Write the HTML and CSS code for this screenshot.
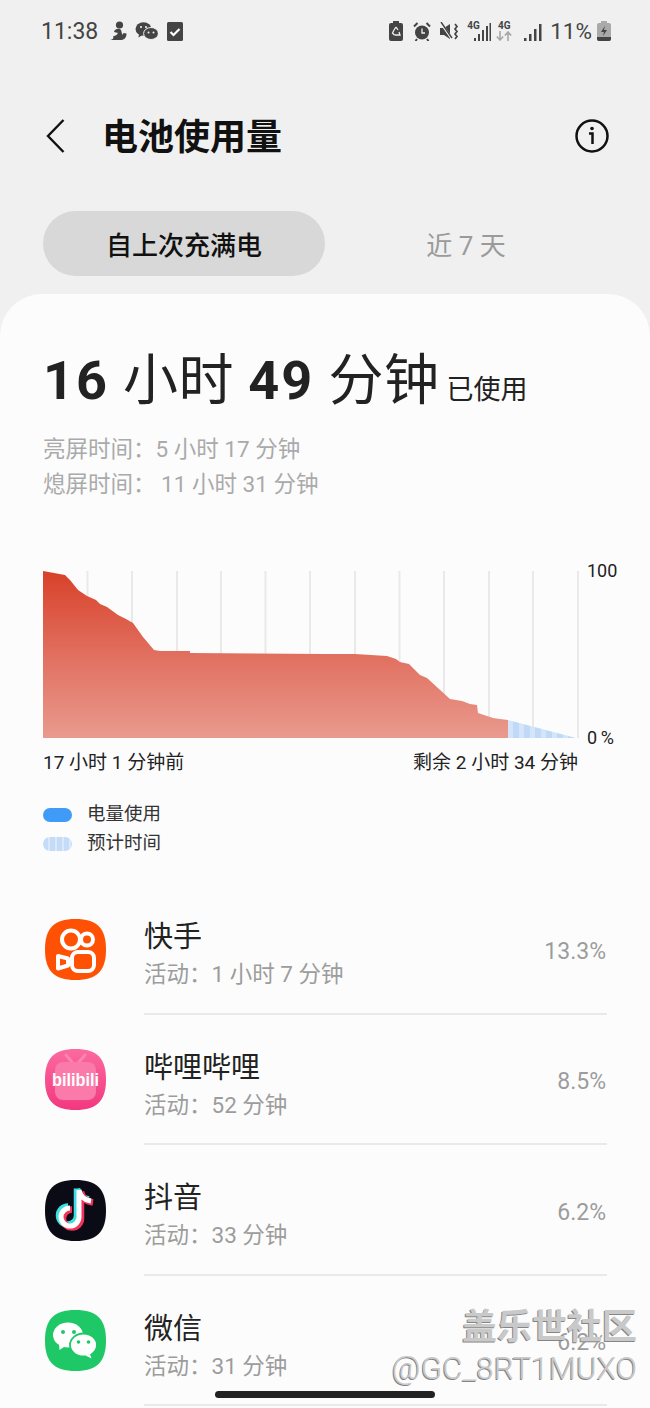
FILE: index.html
```html
<!DOCTYPE html>
<html lang="zh">
<head>
<meta charset="utf-8">
<title>电池使用量</title>
<link rel="stylesheet" href="styles.css">
</head>
<body>
<div class="screen">
  <div class="status">
    <div class="status-left">
      <span class="time">11:38</span>
      <svg class="ml-11" width="18" height="20" viewBox="0 0 18 20"><circle cx="10.500" cy="4" r="3.600" fill="#444"/><path d="M8 8c3-1 4.500 1 4.500 3l1 3 1-2 3 .5c0 4-2 6.500-6 6.500H1c3-.5 4-2 3-3.500l3.500-1.500L9 12l-4-1c0-1 1-2.500 3-3z" fill="#444"/></svg>
      <svg class="ml-8" width="23" height="20" viewBox="0 0 23 20"><ellipse cx="8.5" cy="8" rx="8" ry="6.8" fill="#444"/><path d="M4 13l-.5 3.500 4-2.500z" fill="#444"/><ellipse cx="16" cy="12.500" rx="7.400" ry="6" fill="#444" stroke="#f0f0f0" stroke-width="1"/><circle cx="6" cy="6" r="1.100" fill="#f0f0f0"/><circle cx="11" cy="6" r="1.100" fill="#f0f0f0"/><circle cx="13.500" cy="11.500" r="1" fill="#f0f0f0"/><circle cx="18.500" cy="11.500" r="1" fill="#f0f0f0"/></svg>
      <svg class="ml-9" width="16" height="19" viewBox="0 0 16 19"><rect width="16" height="19" rx="1.500" fill="#444"/><path d="M3.500 10l3 3 6-6" fill="none" stroke="#fff" stroke-width="2.200"/></svg>
    </div>
    <div class="status-right">
      <svg width="14" height="20" viewBox="0 0 14 20"><path d="M4 0h6v2h2a2 2 0 0 1 2 2v14a2 2 0 0 1-2 2H2a2 2 0 0 1-2-2V4a2 2 0 0 1 2-2h2z" fill="#444"/><path d="M7 6l2 3M5 9l-1.500 3 2 2M9 14h2l-1-3" fill="none" stroke="#f0f0f0" stroke-width="1.300"/><path d="M7 6L5 9M5.500 14H9" fill="none" stroke="#f0f0f0" stroke-width="1.300"/></svg>
      <svg class="ml-10" width="18" height="19" viewBox="0 0 18 19"><circle cx="9" cy="10.500" r="7" fill="#444"/><path d="M1 4.500L4.500 1M17 4.500L13.500 1M4 17l-1.500 2M14 17l1.500 2" stroke="#444" stroke-width="2"/><path d="M9 6.500v4.500h3" fill="none" stroke="#f0f0f0" stroke-width="1.300"/></svg>
      <svg class="ml-9" width="19" height="19" viewBox="0 0 19 19"><path d="M0 6h4l6-4v15l-6-4H0z" fill="#444"/><path d="M1 1l11 16" stroke="#f0f0f0" stroke-width="2.400"/><path d="M1 0l11 16" stroke="#444" stroke-width="1.400"/><path d="M15 2l2 2.500-2 2.500 2 2.500-2 2.500 2 2.500-2 2.500" fill="none" stroke="#444" stroke-width="1.700"/></svg>
      <div class="net ml-8">
        <span class="net-label">4G</span>
        <svg width="18" height="18" viewBox="0 0 18 18"><path d="M1 15h2v3H1zM5 11h2v7H5zM9 7h2v11H9zM13 3h2v15h-2z" fill="#444"/><path d="M16.500 0h1.500v18h-1.500z" fill="#444"/></svg>
      </div>
      <div class="net-stack ml-5">
        <span class="net-label">4G</span>
        <svg width="16" height="10" viewBox="0 0 16 10"><path d="M4 0v9M.8 5.500L4 9l3.200-3.500M12 10V1M8.800 4.500L12 1l3.200 3.500" fill="none" stroke="#a8a8a8" stroke-width="1.600"/></svg>
      </div>
      <svg class="ml-12" width="19" height="19" viewBox="0 0 19 19"><path d="M0 16h2.500v3H0zM5 12h2.500v7H5zM10 7h2.500v12H10zM15 2h2.500v17H15z" fill="#444"/></svg>
      <span class="pct ml-7">11%</span>
      <svg class="ml-5" width="14" height="20" viewBox="0 0 14 20"><path d="M4 0h6v2h2a2 2 0 0 1 2 2v14a2 2 0 0 1-2 2H2a2 2 0 0 1-2-2V4a2 2 0 0 1 2-2h2z" fill="#a9a9a9"/><path d="M0 16h14v2a2 2 0 0 1-2 2H2a2 2 0 0 1-2-2z" fill="#444"/><path d="M8 5L4 11h3l-1 4 4-6H7z" fill="#444"/></svg>
    </div>
  </div>

  <header class="header">
    <svg class="back" width="22" height="36" viewBox="0 0 22 36"><path d="M18.500 2L3 18l15.500 16" fill="none" stroke="#111" stroke-width="2.400"/></svg>
    <h1 class="title">电池使用量</h1>
    <svg class="info" width="36" height="36" viewBox="0 0 36 36"><circle cx="18" cy="18" r="15.500" fill="none" stroke="#111" stroke-width="2.500"/><circle cx="18" cy="10.500" r="1.800" fill="#111"/><path d="M15 15.500h3.500V26" fill="none" stroke="#111" stroke-width="2.500"/></svg>
  </header>

  <div class="tabs">
    <div class="tab tab-active">自上次充满电</div>
    <div class="tab">近 7 天</div>
  </div>

  <main class="card">
    <div class="headline"><b>16</b> 小时 <b>49</b> 分钟<span class="used">已使用</span></div>
    <div class="summary">
      <div class="summary-line">亮屏时间：5 小时 17 分钟</div>
      <div class="summary-line">熄屏时间： 11 小时 31 分钟</div>
    </div>

    <div class="chart">
      <svg class="plot" width="536" height="167" viewBox="43 571 536 167">
        <defs>
          <linearGradient id="drain" gradientUnits="userSpaceOnUse" x1="0" y1="571" x2="0" y2="738">
            <stop offset="0" stop-color="#d8412a"/>
            <stop offset="0.5" stop-color="#e16f5f"/>
            <stop offset="1" stop-color="#e99a8e"/>
          </linearGradient>
          <pattern id="stripes" x="508" y="0" width="11" height="10" patternUnits="userSpaceOnUse">
            <rect width="11" height="10" fill="#d4e5f9"/>
            <rect x="5" width="6" height="10" fill="#bfd9f6"/>
          </pattern>
        </defs>
        <g stroke="#e9e9e9" stroke-width="2">
          <path d="M87.500 571V738M132 571V738M177 571V738M221 571V738M265.500 571V738M310 571V738M355 571V738M399.500 571V738M444 571V738M489 571V738M533 571V738M578 571V738"/>
        </g>
        <polygon fill="url(#stripes)" points="508,720 576,738 508,738"/>
        <polygon fill="url(#drain)" points="43,571 65,575 70,580 78,590 87,596 96,600 100,604 107,607 118,615 126,619 133,623 143,637 154,650 160,651 190,651 190,653 325,654 355,654 387,656 396,659 400,662 409,664 420,675 427,678 450,699 462,701 470,704 477,705 478,713 490,717 493,718 500,719 508,720 508,738 43,738"/>
      </svg>
      <div class="axis">
        <span>100</span>
        <span>0&#8201;%</span>
      </div>
    </div>
    <div class="chart-labels">
      <span>17 小时 1 分钟前</span>
      <span>剩余 2 小时 34 分钟</span>
    </div>
    <ul class="legend">
      <li class="legend-item"><i class="swatch swatch-solid"></i>电量使用</li>
      <li class="legend-item"><i class="swatch swatch-striped"></i>预计时间</li>
    </ul>

    <ul class="apps">
      <li class="app">
        <svg class="app-icon" width="61" height="61" viewBox="0 0 61 61">
          <path d="M30.500 0C52 0 61 9 61 30.500S52 61 30.500 61 0 52 0 30.500 9 0 30.500 0z" fill="#ff5103"/>
          <g fill="none" stroke="#fff" stroke-width="4">
            <circle cx="26" cy="20.500" r="9"/>
            <circle cx="42" cy="20.500" r="6"/>
            <rect x="27" y="33" width="22" height="19" rx="6"/>
            <path d="M13 37l10 2.500v7L13 49.500z" stroke-linejoin="round"/>
          </g>
        </svg>
        <div class="app-body">
          <div class="app-text">
            <div class="app-name">快手</div>
            <div class="app-sub">活动：1 小时 7 分钟</div>
          </div>
          <div class="app-pct">13.3%</div>
        </div>
      </li>
      <li class="app">
        <svg class="app-icon" width="61" height="61" viewBox="0 0 61 61">
          <defs><linearGradient id="bili" x1="0" y1="0" x2="0" y2="1"><stop offset="0" stop-color="#fb6a9f"/><stop offset="1" stop-color="#f2387f"/></linearGradient></defs>
          <path d="M30.500 0C52 0 61 9 61 30.500S52 61 30.500 61 0 52 0 30.500 9 0 30.500 0z" fill="url(#bili)"/>
          <path d="M21 6l6 7M40 6l-6 7" stroke="#fb85b0" stroke-width="3" stroke-linecap="round"/>
          <rect x="10" y="13" width="41" height="38" rx="8" fill="#fa7aa9"/>
          <text class="bili-text" x="7" y="37" textLength="47" lengthAdjust="spacingAndGlyphs">bilibili</text>
        </svg>
        <div class="app-body">
          <div class="app-text">
            <div class="app-name">哔哩哔哩</div>
            <div class="app-sub">活动：52 分钟</div>
          </div>
          <div class="app-pct">8.5%</div>
        </div>
      </li>
      <li class="app">
        <svg class="app-icon" width="61" height="61" viewBox="0 0 61 61">
          <path d="M30.500 0C52 0 61 9 61 30.500S52 61 30.500 61 0 52 0 30.500 9 0 30.500 0z" fill="#0b0b16"/>
          <g fill="none" stroke-width="6.500">
            <path d="M34 10v27a9 9 0 1 1-9-9M34 10c1 6 5 10 12 11" stroke="#3ce0e4" transform="translate(-2 -1.500)"/>
            <path d="M34 10v27a9 9 0 1 1-9-9M34 10c1 6 5 10 12 11" stroke="#f0345c" transform="translate(2 1.500)"/>
            <path d="M34 10v27a9 9 0 1 1-9-9M34 10c1 6 5 10 12 11" stroke="#fff" stroke-width="5"/>
          </g>
        </svg>
        <div class="app-body">
          <div class="app-text">
            <div class="app-name">抖音</div>
            <div class="app-sub">活动：33 分钟</div>
          </div>
          <div class="app-pct">6.2%</div>
        </div>
      </li>
      <li class="app">
        <svg class="app-icon" width="61" height="61" viewBox="0 0 61 61">
          <path d="M30.500 0C52 0 61 9 61 30.500S52 61 30.500 61 0 52 0 30.500 9 0 30.500 0z" fill="#1fc866"/>
          <ellipse cx="23" cy="25" rx="15" ry="12.500" fill="#fff"/>
          <path d="M14 34l.5 6 6-4z" fill="#fff"/>
          <ellipse cx="38.500" cy="35" rx="13.500" ry="11.500" fill="#fff" stroke="#1fc866" stroke-width="1.800"/>
          <path d="M45 44l1.500 4.500-6-3z" fill="#fff"/>
          <circle cx="18" cy="22" r="2" fill="#1fc866"/>
          <circle cx="29" cy="22" r="2" fill="#1fc866"/>
          <circle cx="33.500" cy="32" r="1.800" fill="#1fc866"/>
          <circle cx="43.500" cy="32" r="1.800" fill="#1fc866"/>
        </svg>
        <div class="app-body">
          <div class="app-text">
            <div class="app-name">微信</div>
            <div class="app-sub">活动：31 分钟</div>
          </div>
          <div class="app-pct">6.2%</div>
        </div>
      </li>
    </ul>
  </main>

  <div class="watermark">
    <div class="wm-title">盖乐世社区</div>
    <div class="wm-user">@GC_8RT1MUXO</div>
  </div>
  <div class="home-bar"></div>
</div>
</body>
</html>
```
FILE: styles.css
```css
* { box-sizing: border-box; }
html, body { margin: 0; padding: 0; }
body {
  width: 650px;
  height: 1408px;
  overflow: hidden;
  background: #f0f0f0;
  font-family: Roboto, "Noto Sans CJK SC", sans-serif;
  color: #1c1c1c;
}
ul { list-style: none; margin: 0; padding: 0; }
svg { display: block; flex: none; }

.screen { position: relative; width: 650px; height: 1408px; overflow: hidden; }

.ml-5 { margin-left: 5px; }
.ml-7 { margin-left: 7px; }
.ml-8 { margin-left: 8px; }
.ml-9 { margin-left: 9px; }
.ml-10 { margin-left: 10px; }
.ml-11 { margin-left: 11px; }
.ml-12 { margin-left: 12px; }

.status {
  height: 62px;
  padding: 0 39px 0 41px;
  display: flex;
  justify-content: space-between;
  align-items: center;
  color: #444;
}
.status-left, .status-right { display: flex; align-items: center; }
.time { font-size: 23px; }
.pct { font-size: 22.500px; }
.net { position: relative; width: 24px; height: 20px; display: flex; justify-content: flex-end; align-items: flex-end; }
.net-label { font-size: 10px; font-weight: 700; line-height: 10px; color: #444; }
.net .net-label { position: absolute; left: 0; top: 0; }
.net-stack { display: flex; flex-direction: column; align-items: center; width: 16px; }

.header {
  height: 62px;
  margin-top: 43px;
  padding: 0 40px 0 45px;
  display: flex;
  align-items: center;
}
.title {
  margin: 3px 0 0 35px;
  flex: 1;
  font-size: 36px;
  font-weight: 700;
  line-height: 48px;
  color: #111;
}

.tabs { display: flex; margin: 44px 43px 18px; height: 65px; }
.tab {
  flex: 1;
  display: flex;
  align-items: center;
  justify-content: center;
  font-size: 26px;
  color: #9a9a9a;
  border-radius: 33px;
}
.tab:first-child { flex: 0 0 282px; }
.tab-active { background: #d8d8d8; color: #111; font-weight: 500; }

.card {
  height: 1114px;
  padding: 54px 43px 0;
  background: #fcfcfc;
  border-radius: 42px 42px 0 0;
}
.headline { font-size: 55px; line-height: 64px; letter-spacing: 0.5px; color: #222; white-space: nowrap; }
.headline b { font-size: 54px; font-weight: 700; letter-spacing: 2px; }
.used { font-size: 27px; letter-spacing: 0; margin-left: 7px; }
.summary { margin-top: 10px; font-size: 22.500px; line-height: 35px; color: #aaa; }
.summary-line { white-space: pre; }

.chart { display: flex; margin-top: 69px; gap: 8px; }
.axis {
  margin: -11px 0;
  display: flex;
  flex-direction: column;
  justify-content: space-between;
  font-size: 18px;
  line-height: 22px;
  color: #222;
}
.chart-labels {
  width: 535px;
  margin-top: 13px;
  display: flex;
  justify-content: space-between;
  font-size: 19px;
  line-height: 24px;
  color: #222;
}
.legend { margin-top: 25px; font-size: 18.500px; line-height: 29px; color: #333; }
.legend-item { display: flex; align-items: center; }
.swatch { width: 29px; height: 14px; margin-right: 15px; border-radius: 7px; display: block; }
.swatch-solid { background: #3f9bf7; }
.swatch-striped { background: repeating-linear-gradient(90deg, #c4dcf7 0 5px, #d9e8fa 5px 7px); }

.apps { margin-top: 26px; }
.app { display: flex; align-items: center; gap: 38px; padding-left: 2px; height: 130.500px; }
.app-body {
  flex: 1;
  height: 100%;
  display: flex;
  align-items: center;
  justify-content: space-between;
  padding-top: 14px;
  border-bottom: 2px solid #e9e9e9;
}
.app-name { font-size: 29px; line-height: 38px; color: #222; }
.app-sub { font-size: 22.500px; line-height: 36px; color: #9c9c9c; }
.app-pct { font-size: 23px; color: #9c9c9c; padding-right: 1px; margin-top: -8px; }
.bili-text { font-family: "Liberation Sans", sans-serif; font-size: 19px; font-weight: 700; fill: #fff; }

.watermark {
  position: absolute;
  right: 13px;
  top: 1301px;
  text-align: right;
  color: #c9c9c9;
  text-shadow: -1px 1px 0 #858585;
  white-space: nowrap;
}
.wm-title { font-size: 35px; font-weight: 700; line-height: 46px; font-family: "Noto Sans CJK SC", sans-serif; }
.wm-user { font-size: 31.500px; font-weight: 300; line-height: 44px; }

.home-bar {
  position: absolute;
  left: 215px;
  top: 1391px;
  width: 220px;
  height: 7px;
  border-radius: 4px;
  background: #222;
}
```
